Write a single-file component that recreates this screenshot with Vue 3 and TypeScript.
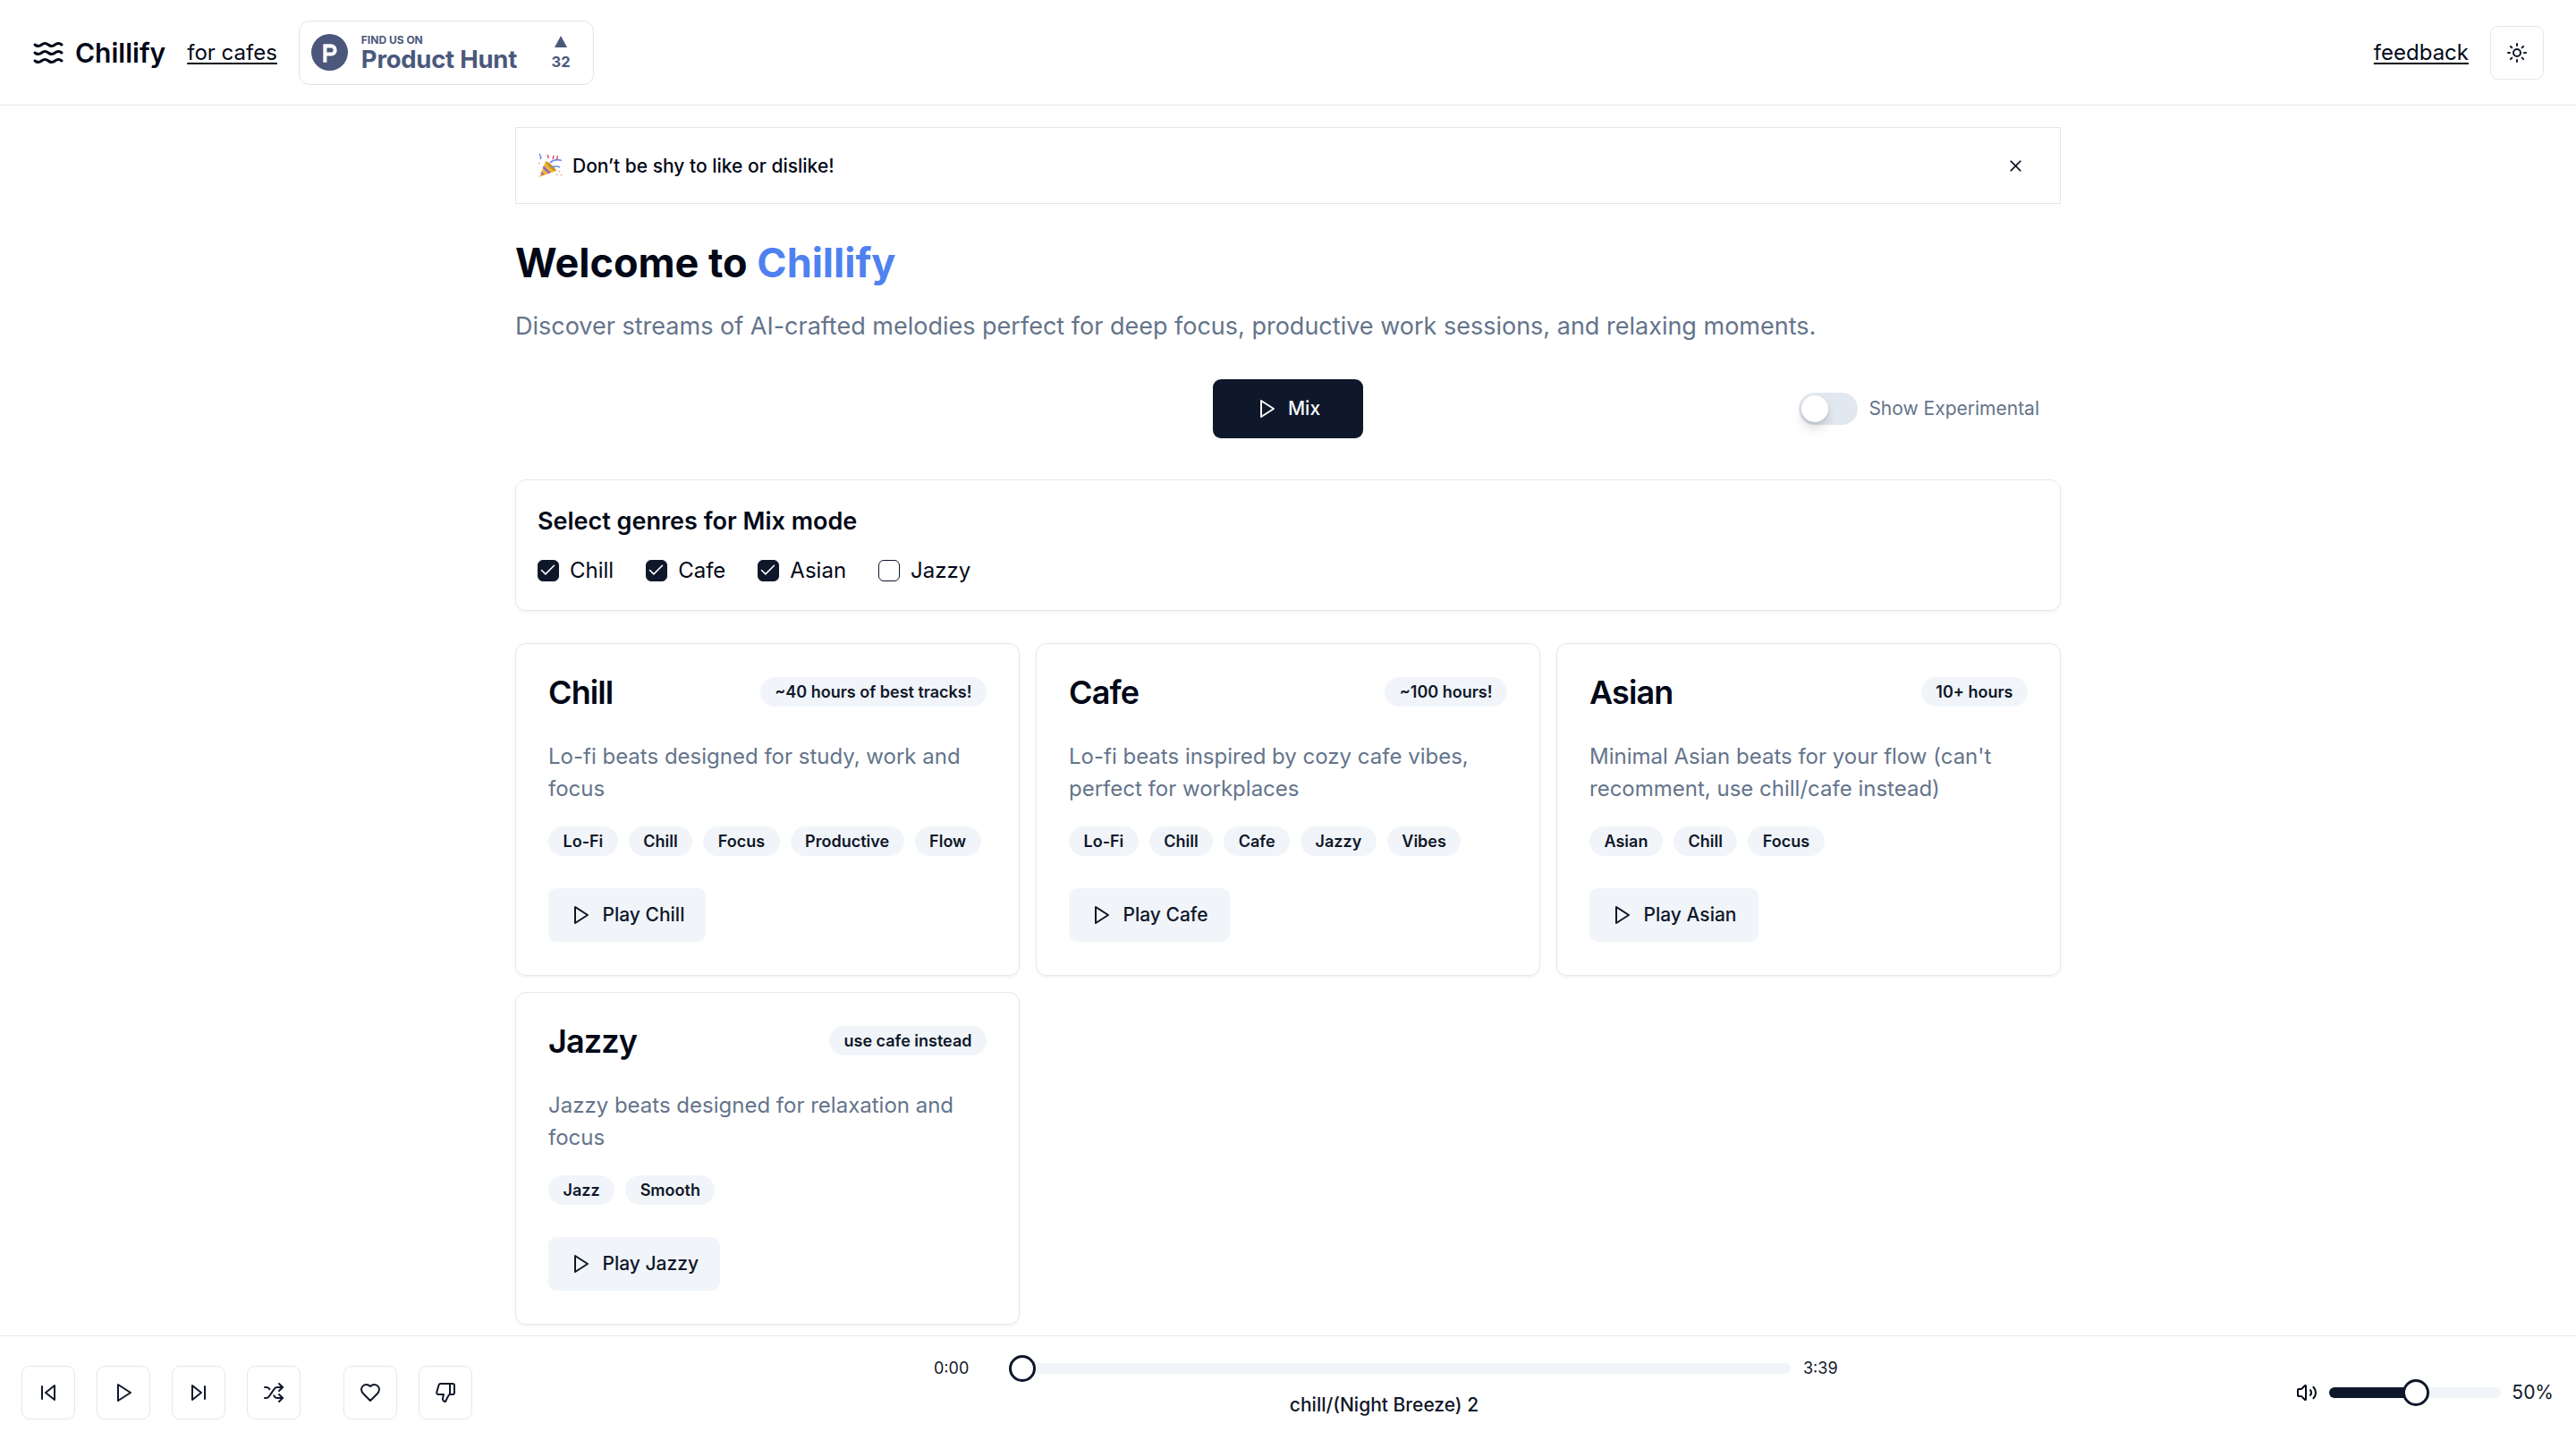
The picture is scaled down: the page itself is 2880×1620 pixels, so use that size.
<script setup lang="ts">
interface Genre { name: string; badge: string; desc: string; tags: string[] }
const genres: Genre[] = [
  { name: 'Chill', badge: '~40 hours of best tracks!', desc: 'Lo-fi beats designed for study, work and focus', tags: ['Lo-Fi', 'Chill', 'Focus', 'Productive', 'Flow'] },
  { name: 'Cafe', badge: '~100 hours!', desc: 'Lo-fi beats inspired by cozy cafe vibes, perfect for workplaces', tags: ['Lo-Fi', 'Chill', 'Cafe', 'Jazzy', 'Vibes'] },
  { name: 'Asian', badge: '10+ hours', desc: "Minimal Asian beats for your flow (can't recomment, use chill/cafe instead)", tags: ['Asian', 'Chill', 'Focus'] },
  { name: 'Jazzy', badge: 'use cafe instead', desc: 'Jazzy beats designed for relaxation and focus', tags: ['Jazz', 'Smooth'] },
]
const checks = [
  { name: 'Chill', on: true },
  { name: 'Cafe', on: true },
  { name: 'Asian', on: true },
  { name: 'Jazzy', on: false },
]
</script>

<template>
  <div class="page">
    <header class="header">
      <div class="brand">
        <svg class="waves" viewBox="0 0 24 24" fill="none" stroke="currentColor" stroke-width="2" stroke-linecap="round" stroke-linejoin="round"><path d="M2 6c.6.5 1.2 1 2.500 1C7 7 7 5 9.500 5c2.600 0 2.400 2 5 2 2.500 0 2.500-2 5-2 1.300 0 1.900.5 2.500 1"/><path d="M2 12c.6.5 1.200 1 2.500 1 2.500 0 2.500-2 5-2 2.600 0 2.400 2 5 2 2.500 0 2.500-2 5-2 1.300 0 1.900.5 2.500 1"/><path d="M2 18c.6.5 1.200 1 2.500 1 2.500 0 2.500-2 5-2 2.600 0 2.400 2 5 2 2.500 0 2.500-2 5-2 1.300 0 1.900.5 2.500 1"/></svg>
        <span class="brand-name">Chillify</span>
      </div>
      <a class="link cafes">for cafes</a>
      <div class="ph">
        <svg class="ph-logo" viewBox="0 0 40 40"><circle cx="20" cy="20" r="20" fill="#4b587c"/><path d="M13 11h8.500a6.500 6.500 0 0 1 0 13H17v7h-4zM17 15v5h4.500a2.500 2.500 0 0 0 0-5z" fill="#fff" fill-rule="evenodd"/></svg>
        <div class="ph-text">
          <span class="ph-small">FIND US ON</span>
          <span class="ph-big">Product Hunt</span>
        </div>
        <div class="ph-vote">
          <span class="ph-tri"></span>
          <span class="ph-count">32</span>
        </div>
      </div>
      <a class="link feedback">feedback</a>
      <button class="icon-btn theme">
        <svg class="ic" viewBox="0 0 24 24" fill="none" stroke="currentColor" stroke-width="2" stroke-linecap="round" stroke-linejoin="round"><circle cx="12" cy="12" r="4"/><path d="M12 2v2M12 20v2M4.930 4.930l1.410 1.410M17.660 17.660l1.410 1.410M2 12h2M20 12h2M6.340 17.660l-1.410 1.410M19.070 4.930l-1.410 1.410"/></svg>
      </button>
    </header>

    <main class="main">
      <div class="alert">
        <svg class="emoji" viewBox="0 0 28 28">
          <path d="M9 9 L21 20 L2 27 Z" fill="#eeb537"/>
          <path d="M7 14.500l7.500 7.500-2.500 1-6.500-6.500zM4.500 21l3 3-2 .8-2-2z" fill="#8e64c9"/>
          <path d="M9 9c4 2 10 6 12 11-3 .5-10-4-12-11z" fill="#c9901c"/>
          <path d="M14 11c3-3 8-4 13-2.500" stroke="#6b93e8" stroke-width="1.800" fill="none"/>
          <path d="M15 16c3-1 6-2 10 0" stroke="#6b93e8" stroke-width="1.400" fill="none"/>
          <path d="M11 2l1.500 4M17 7l1-4M22 3c1 2-1 3 0 5" stroke="#d6486a" stroke-width="1.400" fill="none"/>
          <path d="M2 1c2 1 0 3 2 4l-1 2" stroke="#4f7de8" stroke-width="1.300" fill="none"/>
          <path d="M1 11l1.500 1M24 20l1 1M21 24l1 1M26 24l1 1" stroke="#e0a060" stroke-width="1.500"/>
        </svg>
        <span class="alert-text">Don’t be shy to like or dislike!</span>
        <svg class="close" viewBox="0 0 24 24" fill="none" stroke="currentColor" stroke-width="2" stroke-linecap="round" stroke-linejoin="round"><path d="M18 6 6 18M6 6l12 12"/></svg>
      </div>

      <h1 class="title">Welcome to <span class="accent">Chillify</span></h1>
      <p class="lead">Discover streams of AI-crafted melodies perfect for deep focus, productive work sessions, and relaxing moments.</p>

      <div class="actions">
        <button class="mix">
          <svg class="ic" viewBox="0 0 24 24" fill="none" stroke="currentColor" stroke-width="2" stroke-linecap="round" stroke-linejoin="round"><path d="M6 3l14 9-14 9z"/></svg>
          Mix
        </button>
        <div class="toggle-wrap">
          <span class="toggle"><span class="thumb"></span></span>
          <span class="toggle-label">Show Experimental</span>
        </div>
      </div>

      <section class="select-card">
        <h3 class="select-title">Select genres for Mix mode</h3>
        <div class="checks">
          <label v-for="c in checks" :key="c.name" class="check">
            <span class="box" :class="{ on: c.on }">
              <svg v-if="c.on" viewBox="0 0 24 24" fill="none" stroke="#fff" stroke-width="1.800" stroke-linecap="round" stroke-linejoin="round"><path d="M20 6 9 17l-5-5"/></svg>
            </span>
            {{ c.name }}
          </label>
        </div>
      </section>

      <div class="grid">
        <article v-for="g in genres" :key="g.name" class="card">
          <div class="card-head">
            <h3 class="card-title">{{ g.name }}</h3>
            <span class="pill">{{ g.badge }}</span>
          </div>
          <p class="desc">{{ g.desc }}</p>
          <div class="tags">
            <span v-for="t in g.tags" :key="t" class="pill">{{ t }}</span>
          </div>
          <button class="play">
            <svg class="ic" viewBox="0 0 24 24" fill="none" stroke="currentColor" stroke-width="2" stroke-linecap="round" stroke-linejoin="round"><path d="M6 3l14 9-14 9z"/></svg>
            Play {{ g.name }}
          </button>
        </article>
      </div>
    </main>

    <footer class="player">
      <div class="controls">
        <button class="icon-btn"><svg class="ic" viewBox="0 0 24 24" fill="none" stroke="currentColor" stroke-width="2" stroke-linecap="round" stroke-linejoin="round"><path d="M19 20 9 12l10-8z"/><path d="M5 19V5"/></svg></button>
        <button class="icon-btn"><svg class="ic" viewBox="0 0 24 24" fill="none" stroke="currentColor" stroke-width="2" stroke-linecap="round" stroke-linejoin="round"><path d="M6 3l14 9-14 9z"/></svg></button>
        <button class="icon-btn"><svg class="ic" viewBox="0 0 24 24" fill="none" stroke="currentColor" stroke-width="2" stroke-linecap="round" stroke-linejoin="round"><path d="m5 4 10 8-10 8z"/><path d="M19 5v14"/></svg></button>
        <button class="icon-btn"><svg class="ic" viewBox="0 0 24 24" fill="none" stroke="currentColor" stroke-width="2" stroke-linecap="round" stroke-linejoin="round"><path d="M2 18h1.400c1.300 0 2.500-.6 3.300-1.700l6.100-8.600c.7-1.100 2-1.700 3.300-1.700H22"/><path d="m18 2 4 4-4 4"/><path d="M2 6h1.900c1.500 0 2.900.9 3.600 2.200"/><path d="M22 18h-5.900c-1.300 0-2.600-.7-3.300-1.800l-.5-.8"/><path d="m18 14 4 4-4 4"/></svg></button>
        <button class="icon-btn like"><svg class="ic" viewBox="0 0 24 24" fill="none" stroke="currentColor" stroke-width="2" stroke-linecap="round" stroke-linejoin="round"><path d="M19 14c1.490-1.460 3-3.210 3-5.500A5.500 5.500 0 0 0 16.500 3c-1.760 0-3 .5-4.500 2-1.500-1.500-2.740-2-4.500-2A5.500 5.500 0 0 0 2 8.500c0 2.300 1.500 4.050 3 5.500l7 7Z"/></svg></button>
        <button class="icon-btn"><svg class="ic" viewBox="0 0 24 24" fill="none" stroke="currentColor" stroke-width="2" stroke-linecap="round" stroke-linejoin="round"><path d="M17 14V2"/><path d="M9 18.120 10 14H4.170a2 2 0 0 1-1.920-2.560l2.330-8A2 2 0 0 1 6.500 2H20a2 2 0 0 1 2 2v8a2 2 0 0 1-2 2h-2.760a2 2 0 0 0-1.790 1.110L12 22a3.130 3.130 0 0 1-3-3.880Z"/></svg></button>
      </div>

      <div class="progress">
        <div class="progress-row">
          <span class="time">0:00</span>
          <div class="track"><span class="knob start"></span></div>
          <span class="time">3:39</span>
        </div>
        <div class="song">chill/(Night Breeze) 2</div>
      </div>

      <div class="volume">
        <svg class="ic vol-ic" viewBox="0 0 24 24" fill="none" stroke="currentColor" stroke-width="2" stroke-linecap="round" stroke-linejoin="round"><path d="M11 4.700a.700.700 0 0 0-1.200-.5L6.400 7.600A1.400 1.400 0 0 1 5.400 8H3a1 1 0 0 0-1 1v6a1 1 0 0 0 1 1h2.400a1.400 1.400 0 0 1 1 .4l3.400 3.400a.700.700 0 0 0 1.200-.5z"/><path d="M16 9a5 5 0 0 1 0 6"/><path d="M19.400 18.400a9 9 0 0 0 0-12.700"/></svg>
        <div class="vol-track"><span class="vol-fill"></span><span class="knob mid"></span></div>
        <span class="vol-text">50%</span>
      </div>
    </footer>
  </div>
</template>

<style>
html, body { margin: 0; padding: 0; background: #fff; }
</style>

<style scoped>
.page {
  height: 1620px;
  display: flex;
  flex-direction: column;
  overflow: hidden;
  font-family: Inter, "Noto Sans", sans-serif;
  color: #020817;
  background: #fff;
}
button { font-family: inherit; cursor: pointer; }
.ic { width: 24px; height: 24px; display: block; flex: none; }

.header {
  height: 117px;
  flex: none;
  box-sizing: content-box;
  border-bottom: 1.5px solid #e2e8f0;
  display: flex;
  align-items: center;
  padding: 0 36px 0 36px;
}
.brand { display: flex; align-items: center; gap: 12px; }
.waves { width: 36px; height: 36px; display: block; }
.brand-name { font-size: 30px; font-weight: 600; line-height: 42px; }
.link { font-size: 24px; line-height: 36px; text-decoration: underline; color: #020817; text-underline-offset: 3px; }
.cafes { margin-left: 24px; }
.ph {
  margin-left: 24px;
  width: 330px;
  height: 72px;
  box-sizing: border-box;
  border: 1.5px solid #dee3ec;
  border-radius: 12px;
  display: flex;
  align-items: center;
  padding-left: 13px;
  color: #4b587c;
}
.ph-logo { width: 41px; height: 41px; flex: none; }
.ph-text { margin-left: 15px; display: flex; flex-direction: column; }
.ph-small { font-size: 12px; font-weight: 700; line-height: 14px; }
.ph-big { font-size: 27.400px; font-weight: 700; line-height: 28px; letter-spacing: -0.2px; }
.ph-vote { margin-left: 38px; width: 22px; display: flex; flex-direction: column; align-items: center; }
.ph-tri { width: 0; height: 0; border-left: 7px solid transparent; border-right: 7px solid transparent; border-bottom: 13px solid #4b587c; margin-bottom: 8px; }
.ph-count { font-size: 16.500px; font-weight: 700; line-height: 17px; }
.feedback { margin-left: auto; }
.icon-btn {
  width: 60px;
  height: 60px;
  padding: 0;
  border: 1.5px solid #e2e8f0;
  border-radius: 9px;
  background: #fff;
  color: #0f172a;
  display: flex;
  align-items: center;
  justify-content: center;
}
.theme { margin-left: 24px; }

.main {
  flex: 1;
  min-height: 0;
  width: 1728px;
  margin: 0 auto;
  padding-top: 24px;
}
.alert {
  height: 86px;
  box-sizing: border-box;
  border: 1.5px solid #e2e8f0;
  display: flex;
  align-items: center;
  padding: 0 24px;
}
.emoji { width: 28px; height: 28px; flex: none; }
.alert-text { margin-left: 11px; font-size: 21px; font-weight: 500; flex: 1; }
.close { width: 21px; height: 21px; color: #020817; margin-right: 15px; }
.title { margin: 39px 0 0; font-size: 45px; line-height: 54px; font-weight: 700; }
.accent { color: #4f81f0; }
.lead { margin: 22.500px 0 0; font-size: 27px; line-height: 42px; color: #64748b; }
.actions {
  margin-top: 38px;
  height: 66px;
  display: flex;
  align-items: center;
  position: relative;
  justify-content: center;
}
.mix {
  width: 168px;
  height: 66px;
  border: 0;
  border-radius: 9px;
  background: #0f172a;
  color: #f8fafc;
  font-size: 21px;
  font-weight: 500;
  display: flex;
  align-items: center;
  justify-content: center;
  gap: 12px;
}
.toggle-wrap { position: absolute; right: 24px; top: 15px; display: flex; align-items: center; gap: 12px; }
.toggle { width: 66px; height: 36px; border-radius: 18px; background: #e2e8f0; display: block; position: relative; }
.thumb { position: absolute; left: 3px; top: 3px; width: 30px; height: 30px; border-radius: 50%; background: #fff; box-shadow: 0 8px 12px rgba(15, 23, 42, 0.12), 0 2px 4px rgba(15, 23, 42, 0.1); }
.toggle-label { font-size: 21px; line-height: 30px; color: #64748b; }

.select-card {
  margin-top: 46px;
  height: 147px;
  box-sizing: border-box;
  border: 1.5px solid #e2e8f0;
  border-radius: 12px;
  box-shadow: 0 1.500px 3px rgba(0, 0, 0, 0.05);
  padding: 25.500px 24px 0;
}
.select-title { margin: 0; font-size: 27px; line-height: 42px; font-weight: 600; }
.checks { display: flex; gap: 36px; margin-top: 19px; }
.check { display: flex; align-items: center; gap: 12px; font-size: 24px; line-height: 30px; color: #020817; }
.box { width: 24px; height: 24px; box-sizing: border-box; border-radius: 6px; border: 1.5px solid #0f172a; display: block; }
.box.on { background: #0f172a; }
.box svg { width: 21px; height: 21px; display: block; }

.grid { margin-top: 36px; display: grid; grid-template-columns: repeat(3, 1fr); gap: 18px; }
.card {
  height: 372px;
  box-sizing: border-box;
  border: 1.5px solid #e2e8f0;
  border-radius: 12px;
  box-shadow: 0 1.500px 3px rgba(0, 0, 0, 0.05);
  padding: 36px;
  display: flex;
  flex-direction: column;
  align-items: flex-start;
}
.card-head { width: 100%; height: 36px; display: flex; align-items: center; justify-content: space-between; }
.card-title { margin: 0; font-size: 36px; line-height: 36px; font-weight: 600; letter-spacing: -0.9px; }
.pill {
  height: 33px;
  padding: 0 16.500px;
  box-sizing: border-box;
  border-radius: 17px;
  background: #f1f5f9;
  color: #0f172a;
  font-size: 18px;
  font-weight: 600;
  line-height: 33px;
  white-space: nowrap;
}
.desc { margin: 36px 0 0; height: 72px; font-size: 24px; line-height: 36px; color: #64748b; }
.tags { margin-top: 24px; display: flex; gap: 12px; }
.play {
  margin-top: 36px;
  height: 60px;
  padding: 0 24px;
  border: 0;
  border-radius: 9px;
  background: #f1f5f9;
  color: #0f172a;
  font-size: 21px;
  font-weight: 500;
  display: flex;
  align-items: center;
  gap: 12.500px;
}

.player {
  height: 126px;
  flex: none;
  border-top: 1.5px solid #e2e8f0;
  display: flex;
  align-items: center;
  padding: 0 25px 0 24px;
  background: #fff;
}
.controls { display: flex; gap: 24px; flex: none; }
.like { margin-left: 24px; }
.progress { margin-left: 516px; width: 1012px; display: flex; flex-direction: column; align-items: center; margin-top: -12px; }
.progress-row { width: 100%; display: flex; align-items: center; }
.time { font-size: 18px; line-height: 27px; color: #0f172a; width: 40px; flex: none; }
.track { margin-left: 44px; margin-right: 14px; flex: 1; height: 12px; border-radius: 6px; background: #f1f5f9; position: relative; }
.song { margin-top: 13px; margin-right: 5px; font-size: 21px; font-weight: 500; line-height: 30px; color: #0f172a; }
.knob { position: absolute; top: -9px; width: 30px; height: 30px; box-sizing: border-box; border-radius: 50%; border: 3px solid #0f172a; background: #fff; }
.knob.start { left: 0; }
.knob.mid { left: 82px; }
.volume { margin-left: auto; display: flex; align-items: center; }
.vol-track { margin-left: 13px; width: 192px; height: 12px; border-radius: 6px; background: #f1f5f9; position: relative; }
.vol-fill { position: absolute; left: 0; top: 0; bottom: 0; width: 96px; border-radius: 6px; background: #0f172a; }
.vol-text { margin-left: 12px; font-size: 21px; line-height: 30px; color: #0f172a; }
</style>
